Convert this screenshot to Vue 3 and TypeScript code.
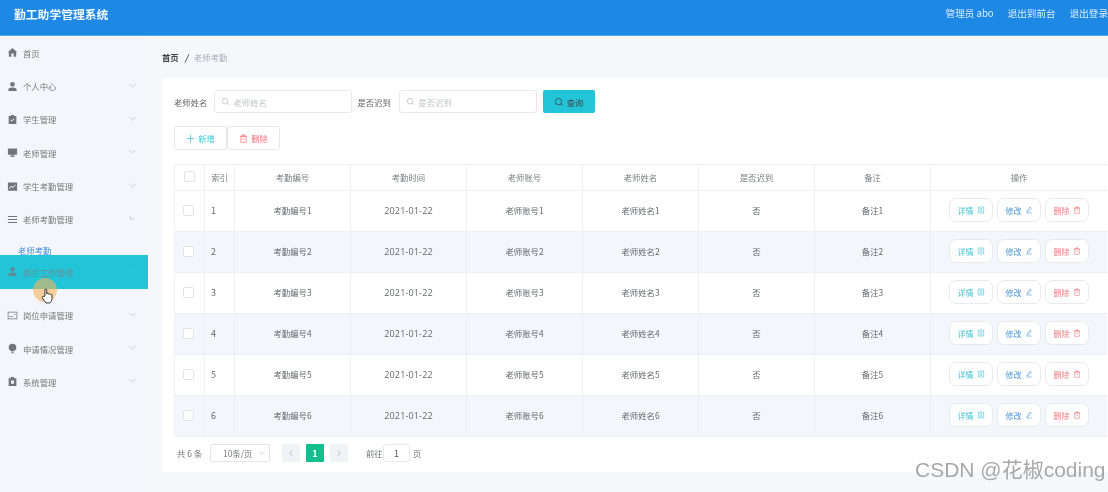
<script setup lang="ts">
interface MenuItem {
  label: string
  icon: string
  chevron: 'down' | 'open' | 'none'
}

const icons: Record<string, string> = {
  home: 'M6 1 0.8 5.6 2 5.6 2 10.5 4.8 10.5 4.8 7.2 7.2 7.2 7.2 10.5 10 10.5 10 5.6 11.2 5.6Z',
  user: 'M6 1a2.6 2.6 0 1 1 0 5.2a2.6 2.6 0 1 1 0-5.2ZM1.5 11V9.3C1.5 7.8 3.5 7 6 7s4.5.8 4.5 2.3V11Z',
  clip: 'M4.4 1h3.2v1.2h2.6V11H1.8V2.2h2.6ZM3.6 6.6l1.7 1.7 3-3-.6-.6-2.4 2.4-1.1-1.1Z',
  screen: 'M1 1.5h10v7H7v1h1.6v1H3.4v-1H5v-1H1Z',
  chart: 'M1 1.5h10v9H1ZM2.3 8.6l2.5-2.4 1.6 1.3 3.2-3.1-.5-.5-2.7 2.6-1.6-1.3-3 2.9Z',
  list: 'M1 2.2h10v1.1H1ZM1 5.5h10v1.1H1ZM1 8.8h10v1.1H1Z',
  card: 'M.8 2h10.4v8H.8ZM1.6 2.8v6.4h8.8V2.8ZM2.8 6.8h3.6v.8H2.8ZM7.4 4.4h1.8v.8H7.4Z',
  pin: 'M6 .8a4.2 4.2 0 0 1 4.2 4.2c0 2.2-1.9 3.7-3.1 4.2H4.9C3.7 8.7 1.800 7.200 1.800 5A4.2 4.2 0 0 1 6 .8ZM4.600 10h2.800v1.200H4.600Z',
  case: 'M4.400 1h3.200v1.400h2.600V11H1.800V2.400h2.600ZM4.400 5v3.400h3.200V5Z'
}

const topMenu: MenuItem[] = [
  { label: '首页', icon: 'home', chevron: 'none' },
  { label: '个人中心', icon: 'user', chevron: 'down' },
  { label: '学生管理', icon: 'clip', chevron: 'down' },
  { label: '老师管理', icon: 'screen', chevron: 'down' },
  { label: '学生考勤管理', icon: 'chart', chevron: 'down' },
  { label: '老师考勤管理', icon: 'list', chevron: 'open' }
]

const bottomMenu: MenuItem[] = [
  { label: '岗位申请管理', icon: 'card', chevron: 'down' },
  { label: '申请情况管理', icon: 'pin', chevron: 'down' },
  { label: '系统管理', icon: 'case', chevron: 'down' }
]

const columns = ['考勤编号', '考勤时间', '老师账号', '老师姓名', '是否迟到', '备注']
const rows = [1, 2, 3, 4, 5, 6]
</script>

<template>
  <div class="page">
    <header class="topbar">
      <div class="brand">勤工助学管理系统</div>
      <nav class="top-links">
        <span>管理员 abo</span>
        <span>退出到前台</span>
        <span>退出登录</span>
      </nav>
    </header>

    <div class="body">
      <aside class="sidebar">
        <div v-for="item in topMenu" :key="item.label" class="menu-row">
          <svg class="menu-icon" viewBox="0 0 12 12"><path :d="icons[item.icon]" /></svg>
          <span class="menu-label">{{ item.label }}</span>
          <svg v-if="item.chevron === 'down'" class="chev" viewBox="0 0 10 10"><path d="M1.500 3.500 5 6.500 8.500 3.500" /></svg>
          <svg v-if="item.chevron === 'open'" class="chev" viewBox="0 0 10 10"><path d="M2.500 2 2.500 5.500 7 5.500" /></svg>
        </div>
        <div class="sub-row">老师考勤</div>
        <div class="menu-row active">
          <svg class="menu-icon" viewBox="0 0 12 12"><path :d="icons.user" /></svg>
          <span class="menu-label">岗位工作管理</span>
          <svg class="chev" viewBox="0 0 10 10"><path d="M1.500 6.500 5 3.500 8.500 6.500" /></svg>
        </div>
        <div class="after-active">
          <div v-for="item in bottomMenu" :key="item.label" class="menu-row">
            <svg class="menu-icon" viewBox="0 0 12 12"><path :d="icons[item.icon]" /></svg>
            <span class="menu-label">{{ item.label }}</span>
            <svg class="chev" viewBox="0 0 10 10"><path d="M1.500 3.500 5 6.500 8.500 3.500" /></svg>
          </div>
        </div>
      </aside>

      <main class="main">
        <div class="crumbs">
          <b>首页</b>
          <i>/</i>
          <span>老师考勤</span>
        </div>

        <section class="card">
          <div class="search">
            <label>老师姓名</label>
            <div class="input">
              <svg viewBox="0 0 12 12"><circle cx="5.500" cy="5.500" r="3.800" /><path d="M8.300 8.300 10.500 10.500" /></svg>
              <span>老师姓名</span>
            </div>
            <label>是否迟到</label>
            <div class="input">
              <svg viewBox="0 0 12 12"><circle cx="5.500" cy="5.500" r="3.800" /><path d="M8.300 8.300 10.500 10.500" /></svg>
              <span>是否迟到</span>
            </div>
            <button class="query">
              <svg viewBox="0 0 12 12"><circle cx="5.500" cy="5.500" r="3.800" /><path d="M8.300 8.300 10.500 10.500" /></svg>
              查询
            </button>
          </div>

          <div class="actions">
            <button class="tool add">
              <svg viewBox="0 0 12 12"><path d="M6 1v10M1 6h10" /></svg>
              新增
            </button>
            <button class="tool del">
              <svg viewBox="0 0 12 12"><path d="M2.500 3h7v8h-7ZM1.500 3h9M4.500 3V1.200h3V3M4.500 6.500h3" /></svg>
              删除
            </button>
          </div>

          <table class="grid">
            <colgroup>
              <col class="c-check" />
              <col class="c-index" />
              <col v-for="c in columns" :key="c" class="c-data" />
              <col />
            </colgroup>
            <thead>
              <tr>
                <th><span class="check head-check"></span></th>
                <th>索引</th>
                <th v-for="c in columns" :key="c">{{ c }}</th>
                <th>操作</th>
              </tr>
            </thead>
            <tbody>
              <tr v-for="n in rows" :key="n">
                <td><span class="check"></span></td>
                <td class="idx">{{ n }}</td>
                <td>考勤编号{{ n }}</td>
                <td class="date">2021-01-22</td>
                <td>老师账号{{ n }}</td>
                <td>老师姓名{{ n }}</td>
                <td>否</td>
                <td>备注{{ n }}</td>
                <td>
                  <div class="ops">
                    <button class="op teal">详情
                      <svg viewBox="0 0 12 12"><path d="M2 1.500h8v9H2ZM4 4h4M4 6h4M4 8h4" /></svg>
                    </button>
                    <button class="op blue">修改
                      <svg viewBox="0 0 12 12"><path d="M7.500 1.500 9.500 3.500 4.500 8.500 2.800 8.700ZM2 10.500h8" /></svg>
                    </button>
                    <button class="op red">删除
                      <svg viewBox="0 0 12 12"><path d="M2.500 3h7v8h-7ZM1.500 3h9M4.500 3V1.200h3V3M4.500 6.500h3" /></svg>
                    </button>
                  </div>
                </td>
              </tr>
            </tbody>
          </table>

          <div class="pager">
            <span class="total">共 6 条</span>
            <div class="size">
              <span>10条/页</span>
              <svg viewBox="0 0 10 10"><path d="M1.500 3.500 5 6.500 8.500 3.500" /></svg>
            </div>
            <span class="pg arrow"><svg viewBox="0 0 10 10"><path d="M6.500 1.500 3.500 5 6.500 8.500" /></svg></span>
            <span class="pg current">1</span>
            <span class="pg arrow"><svg viewBox="0 0 10 10"><path d="M3.500 1.500 6.500 5 3.500 8.500" /></svg></span>
            <span class="goto">前往</span>
            <span class="jump">1</span>
            <span class="unit">页</span>
          </div>
        </section>
      </main>
    </div>

    <div class="cursor-ring"></div>
    <svg class="cursor-hand" viewBox="0 0 14 17">
      <path d="M4.200 8.500V2.200c0-1.500 2-1.500 2 0V6.300c.4-.9 1.900-.8 2 .2.500-.8 1.800-.6 1.900.4.600-.6 1.700-.3 1.700.8v3.400c0 2-1 3.900-2.200 4.900H5.400C4 14.600 2.900 12.700 1.500 10.600.800 9.500 2.300 8.300 3.300 9.300Z" />
    </svg>
    <div class="watermark">CSDN @花椒coding</div>
  </div>
</template>

<style>
html,
body {
  margin: 0;
  background: #f6f7fb;
  overflow: hidden;
}
</style>

<style scoped>
.page {
  position: relative;
  width: 1108px;
  height: 492px;
  overflow: hidden;
  background: #f6f7fb;
  color: #666;
  font-family: "Noto Sans CJK SC", "Open Sans", sans-serif;
  font-size: 8.400px;
  filter: blur(0.55px);
}

svg {
  display: block;
  flex: none;
}

.topbar {
  height: 36px;
  background: #1e88e5;
  display: flex;
  align-items: center;
  justify-content: space-between;
  padding: 0 0 0 14px;
  box-sizing: border-box;
  border-bottom: 1px solid #58a8ec;
}

.brand {
  color: #f1f7fd;
  font-size: 11.800px;
  font-weight: 700;
  margin-top: -9px;
}

.top-links {
  display: flex;
  gap: 14px;
  color: #dcecfb;
  font-size: 9.600px;
  margin-top: -9px;
}

.body {
  display: flex;
  height: 456px;
}

.sidebar {
  width: 148px;
  flex: none;
  background: #f5f6fc;
}

.menu-row {
  height: 33.350px;
  display: flex;
  align-items: center;
  padding: 0 11px 0 7px;
  box-sizing: border-box;
  color: #777;
}

.menu-icon {
  width: 11px;
  height: 11px;
  fill: #73757b;
}

.menu-label {
  margin-left: 5px;
  flex: 1;
}

.chev {
  width: 9px;
  height: 9px;
  fill: none;
  stroke: #c2c4cb;
  stroke-width: 0.900;
  margin-bottom: 2px;
}

.sub-row {
  height: 18.500px;
  padding: 8px 0 0 18px;
  box-sizing: border-box;
  color: #3e8fd8;
  line-height: 12px;
}

.menu-row.active {
  background: #22c5d8;
  height: 34px;
  color: #6f8b94;
}

.menu-row.active .menu-icon {
  fill: #5e8c97;
}

.menu-row.active .chev {
  stroke: #47cfdf;
}

.after-active {
  margin-top: 10px;
}

.main {
  flex: 1;
  min-width: 0;
}

.crumbs {
  height: 42px;
  padding-left: 14px;
  display: flex;
  align-items: center;
  gap: 5px;
  color: #a9adb8;
}

.crumbs b {
  color: #444;
  font-weight: 700;
}

.crumbs i {
  color: #444;
  font-weight: 700;
  margin: 0 1px;
}

.card {
  margin-left: 14px;
  background: #fff;
  height: 394px;
  padding: 12px 1px 0 12px;
  box-sizing: border-box;
}

.search {
  display: flex;
  align-items: center;
  height: 23px;
}

.search label {
  width: 40px;
  color: #666;
  flex: none;
}

.input {
  width: 138px;
  height: 23px;
  box-sizing: border-box;
  border: 1px solid #e8e9ee;
  border-radius: 3px;
  display: flex;
  align-items: center;
  gap: 4px;
  padding-left: 6px;
  color: #c2c4ca;
  margin-left: -0.500px;
  margin-right: 6px;
}

.input + label + .input {
  margin-left: 1px;
}

.input svg {
  width: 9px;
  height: 9px;
  fill: none;
  stroke: #bbbdc4;
}

.query {
  width: 52px;
  height: 23px;
  background: #22c5d8;
  border: 0;
  border-radius: 2px;
  display: flex;
  align-items: center;
  justify-content: center;
  gap: 3px;
  font: inherit;
  color: #444;
  padding: 0;
}

.query svg {
  width: 10px;
  height: 10px;
  fill: none;
  stroke: #3a4a50;
}

.actions {
  display: flex;
  margin-top: 13px;
  height: 24px;
}

.tool {
  width: 53px;
  height: 24px;
  background: #fff;
  border: 1px solid #e6e7ec;
  border-radius: 3px;
  display: flex;
  align-items: center;
  justify-content: center;
  gap: 3px;
  font: inherit;
  padding: 0;
}

.tool svg {
  width: 9px;
  height: 9px;
  fill: none;
  stroke: currentColor;
}

.add {
  color: #3cc8d8;
}

.del {
  color: #ee7575;
}

.grid {
  margin-top: 14px;
  width: 933px;
  table-layout: fixed;
  border-collapse: collapse;
}

.c-check {
  width: 30px;
}

.c-index {
  width: 30px;
}

.c-data {
  width: 116px;
}

.grid th,
.grid td {
  border: 1px solid #eff0f5;
  border-top: 0;
  text-align: center;
  padding: 0 0 2px;
  color: #66686f;
  font-weight: 400;
}

.grid th:last-child,
.grid td:last-child {
  border-right: 0;
}

.grid thead tr {
  height: 26px;
}

.grid thead th {
  border-top: 1px solid #eff0f5;
  color: #7a7c83;
}

.grid tbody tr {
  height: 41px;
}

.grid tbody tr:nth-child(even) td {
  background: #f5f6fb;
}

.grid .idx {
  text-align: left;
  padding-left: 6px;
  font-size: 9px;
}

.grid .date {
  font-family: "Open Sans", sans-serif;
  font-size: 9px;
  letter-spacing: 0.150px;
}

.check {
  display: block;
  width: 9px;
  height: 9px;
  border: 1px solid #e2e3e8;
  border-radius: 2px;
  background: #fff;
  margin: 0 auto 0 8px;
}

.head-check {
  margin-left: 9px;
}

.ops {
  display: flex;
  justify-content: center;
  gap: 4.500px;
}

.op {
  width: 43.500px;
  height: 24px;
  background: #fff;
  border: 1px solid #e9eaef;
  border-radius: 7px;
  display: flex;
  align-items: center;
  justify-content: center;
  gap: 3px;
  padding: 0;
  font: inherit;
  font-size: 8px;
}

.op svg {
  width: 8px;
  height: 8px;
  fill: none;
  stroke: currentColor;
  stroke-width: 0.900;
}

.grid td .teal {
  color: #3cc3d3;
}

.grid td .blue {
  color: #4c96d7;
}

.grid td .red {
  color: #ee7b82;
}

.pager {
  display: flex;
  align-items: center;
  height: 18px;
  margin-top: 7px;
  padding-left: 3px;
  color: #74767d;
}

.total {
  width: 33px;
}

.size {
  width: 60px;
  height: 18px;
  box-sizing: border-box;
  border: 1px solid #e4e5ea;
  border-radius: 2px;
  display: flex;
  align-items: center;
  padding: 0 3px 0 12px;
  justify-content: space-between;
  margin-right: 12px;
}

.size svg {
  width: 8px;
  height: 8px;
  fill: none;
  stroke: #bfc1c8;
  stroke-width: 0.800;
}

.pg {
  width: 18px;
  height: 18px;
  display: flex;
  align-items: center;
  justify-content: center;
  border-radius: 1px;
  margin-right: 6px;
}

.pg.arrow {
  background: #f2f3f6;
}

.pg.arrow svg {
  width: 8px;
  height: 8px;
  fill: none;
  stroke: #b6b8bf;
}

.pg.current {
  background: #11bf8f;
  color: #fff;
  font-weight: 700;
  font-size: 9px;
}

.goto {
  margin-left: 12px;
  width: 17px;
}

.jump {
  width: 27px;
  height: 18px;
  box-sizing: border-box;
  border: 1px solid #e8e9ee;
  border-radius: 3px;
  display: flex;
  align-items: center;
  justify-content: center;
  color: #555;
  font-size: 9px;
}

.unit {
  margin-left: 3px;
}

.cursor-ring {
  position: absolute;
  left: 33px;
  top: 278px;
  width: 24px;
  height: 24px;
  border-radius: 50%;
  background: rgba(246, 178, 90, 0.6);
}

.cursor-hand {
  position: absolute;
  left: 41px;
  top: 288px;
  width: 13px;
  height: 16px;
  fill: #fff;
  stroke: #222;
  stroke-width: 1;
}

.watermark {
  position: absolute;
  left: 915px;
  top: 458px;
  color: #a8a8a8;
  font-family: "Liberation Sans", "Noto Sans CJK SC", sans-serif;
  font-size: 21px;
  line-height: 24px;
  white-space: nowrap;
}
</style>
